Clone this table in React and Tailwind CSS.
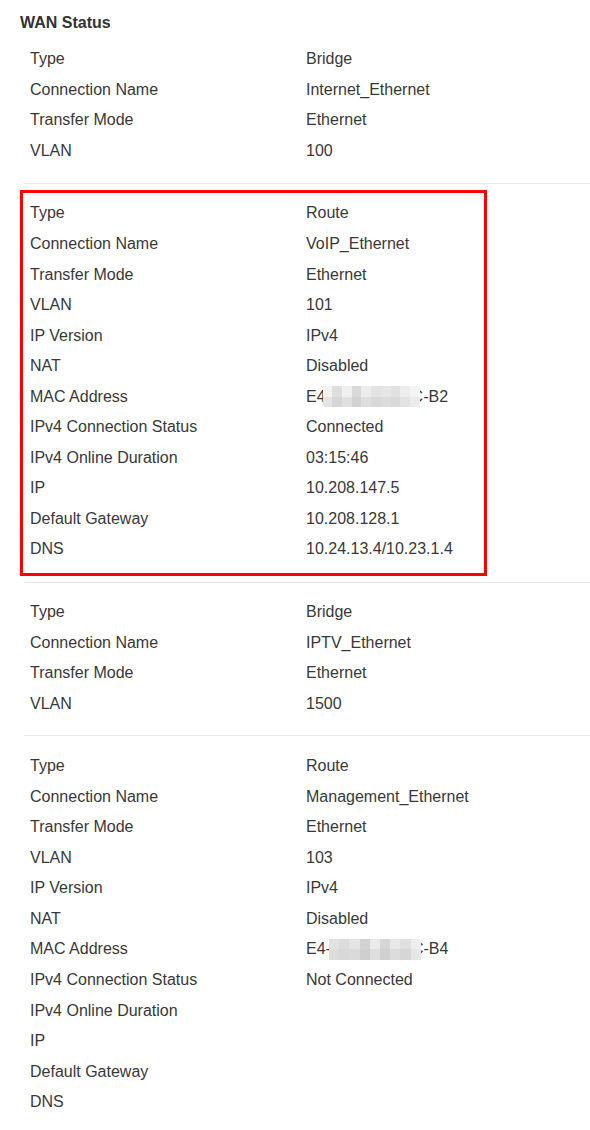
import React from "react";

const blocks = [
  [
    ["Type", "Bridge"],
    ["Connection Name", "Internet_Ethernet"],
    ["Transfer Mode", "Ethernet"],
    ["VLAN", "100"],
  ],
  [
    ["Type", "Route"],
    ["Connection Name", "VoIP_Ethernet"],
    ["Transfer Mode", "Ethernet"],
    ["VLAN", "101"],
    ["IP Version", "IPv4"],
    ["NAT", "Disabled"],
    ["MAC Address", "mac1"],
    ["IPv4 Connection Status", "Connected"],
    ["IPv4 Online Duration", "03:15:46"],
    ["IP", "10.208.147.5"],
    ["Default Gateway", "10.208.128.1"],
    ["DNS", "10.24.13.4/10.23.1.4"],
  ],
  [
    ["Type", "Bridge"],
    ["Connection Name", "IPTV_Ethernet"],
    ["Transfer Mode", "Ethernet"],
    ["VLAN", "1500"],
  ],
  [
    ["Type", "Route"],
    ["Connection Name", "Management_Ethernet"],
    ["Transfer Mode", "Ethernet"],
    ["VLAN", "103"],
    ["IP Version", "IPv4"],
    ["NAT", "Disabled"],
    ["MAC Address", "mac2"],
    ["IPv4 Connection Status", "Not Connected"],
    ["IPv4 Online Duration", ""],
    ["IP", ""],
    ["Default Gateway", ""],
    ["DNS", ""],
  ],
];

// pixelated blur over the hidden part of the MAC
const mosaicA = [
  ["#f3f3f3", "#dedede", "#f0f0f0", "#d9d9d9", "#ececec", "#e3e3e3", "#e6e6e6", "#e1e1e1", "#ededed", "#f4f4f4"],
  ["#e4e4e4", "#d6d6d6", "#e0e0e0", "#d2d2d2", "#dddddd", "#d8d8d8", "#dcdcdc", "#d9d9d9", "#e2e2e2", "#ebebeb"],
];
const mosaicB = [
  ["#e2e2e2", "#dcdcdc", "#e4e4e4", "#d2d2d2", "#ebebeb", "#d6d6d6", "#e8e8e8", "#e0e0e0", "#eeeeee"],
  ["#dcdcdc", "#d8d8d8", "#dadada", "#cfcfcf", "#dedede", "#d0d0d0", "#dcdcdc", "#d6d6d6", "#e6e6e6"],
];

function Mosaic({ cells, className }) {
  return (
    <span className={`relative z-10 inline-flex h-[21px] flex-col ${className}`}>
      {cells.map((row, i) => (
        <span key={i} className="flex flex-1">
          {row.map((c, j) => (
            <span key={j} className="flex-1" style={{ background: c }} />
          ))}
        </span>
      ))}
    </span>
  );
}

function Value({ v }) {
  if (v === "mac1")
    return (
      <span className="flex items-center">
        E4
        <Mosaic cells={mosaicA} className="-ml-[3px] mr-[-8px] w-[97px]" />
        C-B2
      </span>
    );
  if (v === "mac2")
    return (
      <span className="flex items-center">
        E4-
        <Mosaic cells={mosaicB} className="-ml-[2px] mr-[-9px] w-[92px]" />
        C-B4
      </span>
    );
  return <span>{v}</span>;
}

function Rows({ rows, labelClass }) {
  return rows.map(([k, v]) => (
    <div key={k} className="flex h-[30.55px] items-center">
      <div className={labelClass}>{k}</div>
      <Value v={v} />
    </div>
  ));
}

export default function App() {
  return (
    <div className="min-h-[1130px] w-[590px] bg-white pl-[20px] font-['Liberation_Sans',Arial,sans-serif] text-[16px] text-[#383838]">
      <h2 className="pt-[13px] text-[16px] font-bold leading-[20px] text-[#333]">WAN Status</h2>

      <div className="ml-[4px] pt-[11px] pb-[17px]">
        <Rows rows={blocks[0]} labelClass="w-[282px] pl-[6px]" />
      </div>

      <div className="ml-[4px] border-t border-[#e8e8e8] pt-[6px] pb-[6px]">
        <div className="-ml-[4px] w-[467px] border-[3px] border-[#ff0000] pt-[5px] pb-[8px]">
          <Rows rows={blocks[1]} labelClass="w-[283px] pl-[7px]" />
        </div>
      </div>

      <div className="ml-[4px] border-t border-[#e8e8e8] pt-[14px] pb-[16px]">
        <Rows rows={blocks[2]} labelClass="w-[282px] pl-[6px]" />
      </div>

      <div className="ml-[4px] border-t border-[#e8e8e8] pt-[15px] pb-[12px]">
        <Rows rows={blocks[3]} labelClass="w-[282px] pl-[6px]" />
      </div>
    </div>
  );
}
